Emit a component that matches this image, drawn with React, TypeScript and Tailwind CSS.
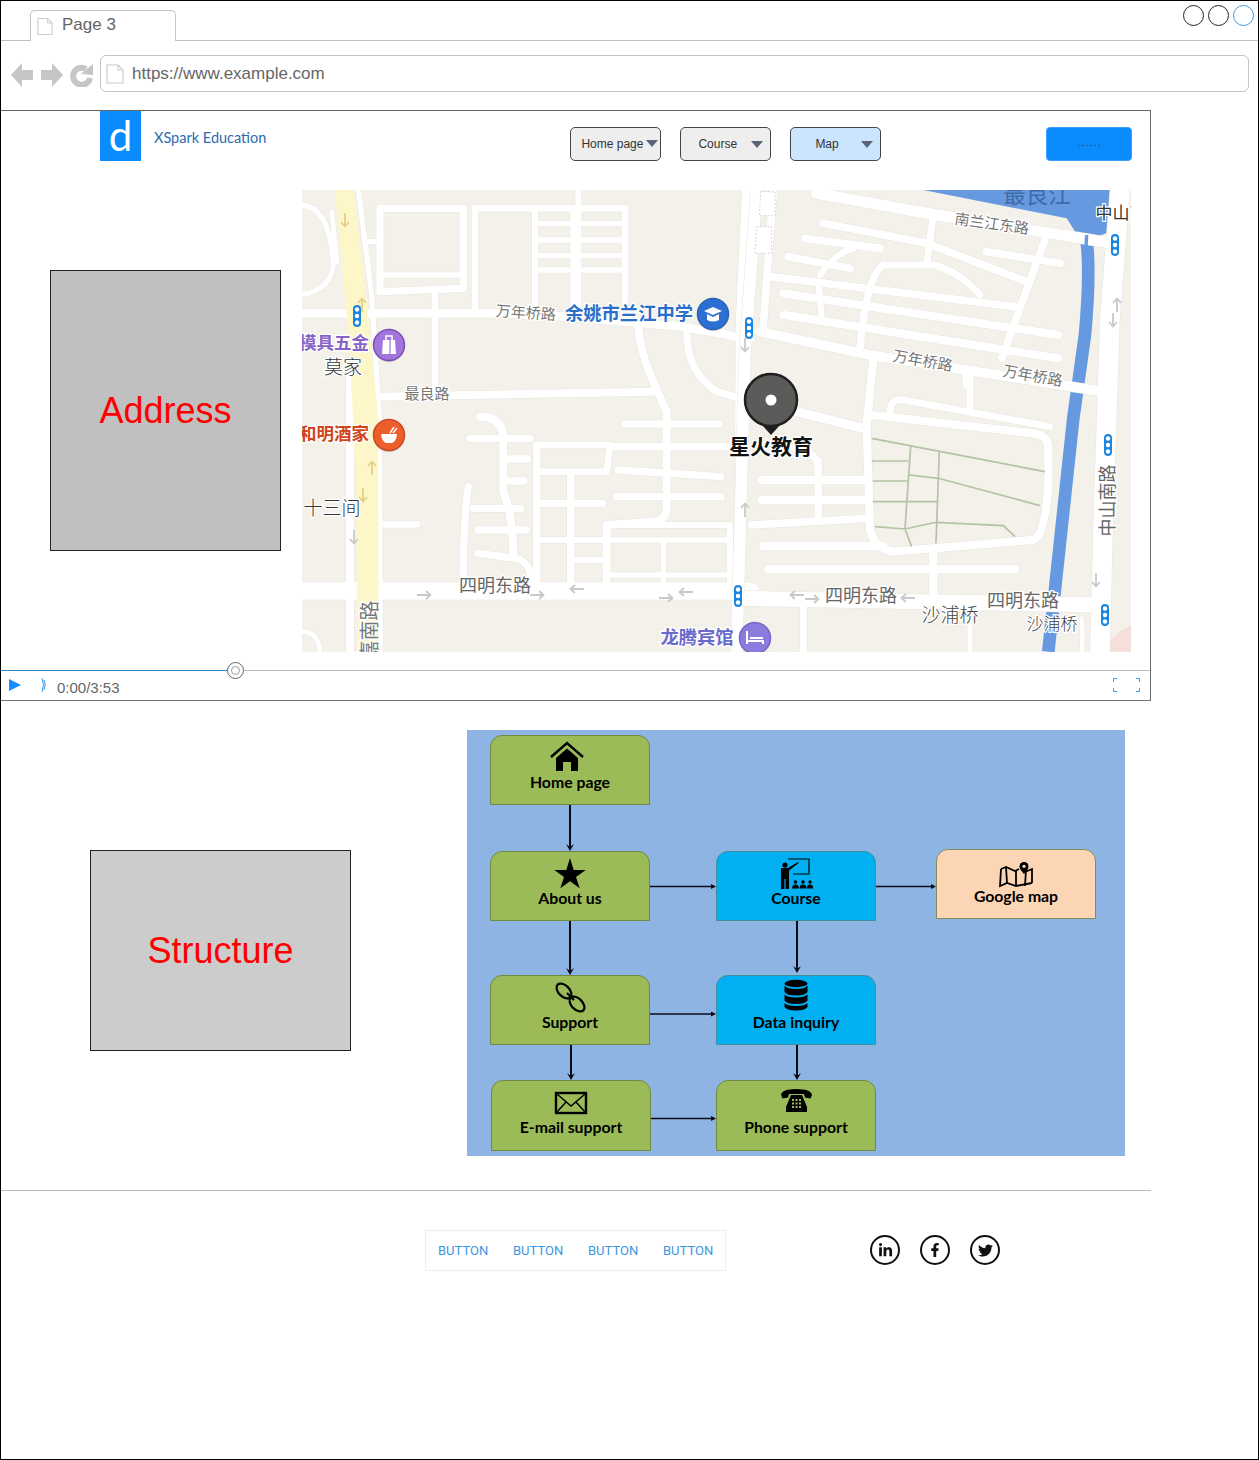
import { FaLinkedinIn, FaFacebookF, FaTwitter } from "react-icons/fa";

type Road = [string, number];

const roadsLeft: Road[] = [
  ["M5 385 L600 385 L800 395 L1150 425 L1350 462", 24],
  ["M235 635 L1060 620", 22],
  ["M0 1218 H1350", 50],
  ["M240 320 V70 H490 V310 L240 320", 20],
  ["M250 270 H490", 14],
  ["M195 170 H240", 14],
  ["M405 330 V620", 18],
  ["M525 385 V70 H975 V385", 18],
  ["M705 70 V380 M835 15 V380 M820 70 V380", 16],
  ["M705 115 H975 M705 165 H975 M705 212 H975 M705 255 H975", 14],
  ["M1015 425 Q1020 500 1060 590 L1100 680 V970 Q1100 1005 1060 1010 L920 1020 V1190", 22],
  ["M1160 440 Q1160 560 1250 620 L1340 645", 20],
  ["M975 717 H1255", 20],
  ["M940 785 H1320", 20],
  ["M955 855 L1262 875", 20],
  ["M950 935 H1262", 20],
  ["M540 695 Q610 695 610 760 V920 Q640 1000 640 1105", 22],
  ["M510 760 H690 M610 822 H682 M610 888 H672 M520 970 H662 M535 1035 H678", 20],
  ["M535 1105 L650 1120 Q690 1130 695 1190", 20],
  ["M505 905 Q490 1000 490 1190", 20],
  ["M710 780 H930 L920 860 H710", 18],
  ["M710 780 V1190 M812 870 V1190", 20],
  ["M710 955 H908", 20],
  ["M720 1065 H910 M820 1125 H910", 16],
  ["M920 1020 H1290 V1190 M920 1020 V1190", 16],
  ["M1090 1070 V1190 M930 1065 H1280 M930 1170 H1280", 14],
  ["M240 1018 H352", 18],
  ["M5 60 Q90 70 100 230 Q100 310 5 330", 14],
  ["M95 80 L112 230", 12],
  ["M150 550 V1400", 22],
  ["M175 15 L215 330 L238 700 L242 1400", 14],
  ["M5 1340 Q55 1340 60 1400", 12],
  ["M1340 15 L1322 400 L1315 1400", 26],
];

const roadsRight: Road[] = [
  ["M1200 15 L1170 400 L1150 1000 L1140 1400", 54],
  ["M290 25 L650 90 L1180 175", 28],
  ["M160 15 L130 420", 18],
  ["M310 115 L620 175 L920 290", 18],
  ["M255 160 L480 190", 18],
  ["M205 215 L390 250", 18],
  ["M800 200 L1020 235", 18],
  ["M150 275 L885 365", 18],
  ["M190 325 L1015 450", 20],
  ["M190 390 L1015 520", 20],
  ["M640 90 L620 240", 16],
  ["M975 165 L845 520", 18],
  ["M300 270 Q350 200 400 190 M295 290 L305 400", 14],
  ["M490 240 Q440 270 420 490", 18],
  ["M490 240 H640 Q720 260 780 330", 16],
  ["M120 440 L450 510 L1150 620", 24],
  ["M460 520 L440 720 L450 1030 Q460 1090 520 1100 L940 1065 Q975 1050 985 900 V790 Q985 750 940 745 L450 690", 20],
  ["M230 680 L430 730", 22],
  ["M510 680 Q510 640 550 645 L990 725", 16],
  ["M750 570 V670 M738 560 V600", 16],
  ["M95 1020 L440 1000", 18],
  ["M125 885 H440 M125 945 H440", 20],
  ["M295 830 V1000", 18],
  ["M220 790 Q295 800 295 850", 16],
  ["M130 1083 H490", 20],
  ["M145 1153 H885", 20],
  ["M640 1100 V1240", 20],
  ["M60 1240 L1140 1260", 40],
  ["M250 1270 V1400", 16],
  ["M750 1300 V1400", 10],
  ["M1085 1300 Q1090 1340 1085 1400", 8],
  ["M110 15 L75 500 L50 1400", 30],
];

function Roads({ list, extra }: { list: Road[]; extra: number }) {
  return (
    <>
      {list.map(([d, w], i) => (
        <path key={`c${i}`} d={d} fill="none" stroke="#e7e5dd" strokeWidth={w + extra + 3} strokeLinecap="round" strokeLinejoin="round" />
      ))}
      {list.map(([d, w], i) => (
        <path key={`r${i}`} d={d} fill="none" stroke="#ffffff" strokeWidth={w + extra} strokeLinecap="round" strokeLinejoin="round" />
      ))}
    </>
  );
}

function Traffic({ x, y }: { x: number; y: number }) {
  return (
    <g transform={`translate(${x - 302} ${y - 190})`}>
      <rect x={-4} y={-11} width={8} height={22} rx={4} fill="#1b86dd" />
      <circle cy={-6.5} r={2.2} fill="#fff" />
      <circle r={2.2} fill="#fff" />
      <circle cy={6.5} r={2.2} fill="#fff" />
    </g>
  );
}

function Arrow({ x, y, r, c = "#c9c9c9" }: { x: number; y: number; r: number; c?: string }) {
  return (
    <g transform={`translate(${x - 302} ${y - 190}) rotate(${r})`} fill="none" stroke={c} strokeWidth={1.8}>
      <path d="M-7 0 H6 M2 -4 L6.5 0 L2 4" />
    </g>
  );
}

function Label({
  x, y, s, c, t, w = 400, rot = 0, halo = true,
}: { x: number; y: number; s: number; c: string; t: string; w?: number; rot?: number; halo?: boolean }) {
  const mx = x - 302;
  const my = y - 190 - 1.5;
  return (
    <text
      x={mx}
      y={my}
      fontSize={s}
      fontWeight={w}
      fill={c}
      stroke={halo ? "#ffffff" : "none"}
      strokeWidth={halo ? 2.5 : 0}
      paintOrder="stroke"
      textAnchor="middle"
      dominantBaseline="central"
      transform={rot ? `rotate(${rot} ${mx} ${my})` : undefined}
    >
      {t}
    </text>
  );
}

function Poi({ x, y, fill, ring, children }: { x: number; y: number; fill: string; ring: string; children: React.ReactNode }) {
  return (
    <g transform={`translate(${x - 302} ${y - 190})`}>
      <circle r={16} cy={1} fill="#00000030" />
      <circle r={15.5} fill={fill} stroke={ring} strokeWidth={1.5} />
      {children}
    </g>
  );
}

function MapDrawing() {
  return (
    <svg viewBox="0 0 829 462" className="block w-[829px] h-[462px] [font-family:'Noto_Sans_CJK_SC',sans-serif]">
      <rect width={829} height={462} fill="#f3f1ea" />
      <g transform="translate(418 -5) scale(0.3333)">
        <path d="M610 15 H1185 V135 L1130 155 L1072 150 L1040 100 Z" fill="#6699e0" />
        <path d="M1100 170 Q1112 260 1095 450 L1060 700 L985 1400" fill="none" stroke="#6699e0" strokeWidth={38} />
        <path d="M1155 1400 Q1180 1340 1240 1320 V1400 Z" fill="#f6dfdb" />
      </g>
      <g transform="translate(-2 -5) scale(0.3333)">
        <Roads list={roadsLeft} extra={2} />
        <path d="M105 15 H160 L195 300 L235 700 L235 1400 H172 L168 900 L150 500 Z" fill="#fdf6c8" />
      </g>
      <g transform="translate(418 -5) scale(0.3333)">
        <Roads list={roadsRight} extra={5} />
        <path d="M1100 150 L1098 190" fill="none" stroke="#6699e0" strokeWidth={10} />
        <path
          d="M455 760 L975 860 M455 828 H565 M458 888 H565 M458 950 H650 M465 1025 L555 1032 L648 1012 L850 1022 L885 1055 M572 785 L555 1032 L575 1085 M658 797 L648 1075 M568 870 L655 880 L960 962"
          fill="none"
          stroke="#b4c3a3"
          strokeWidth={5}
        />
        <path d="M122 20 H165 V92 H118 Z M110 125 H155 V205 H105 Z" fill="#ffffff" stroke="#cfcfc8" strokeWidth={3} strokeDasharray="5 6" />
      </g>

      <Arrow x={345} y={220} r={90} c="#e3cf87" />
      <Arrow x={362} y={305} r={-90} c="#e3cf87" />
      <Arrow x={372} y={468} r={-90} c="#e3cf87" />
      <Arrow x={363} y={495} r={90} c="#e3cf87" />
      <Arrow x={354} y={537} r={90} />
      <Arrow x={424} y={595} r={0} />
      <Arrow x={537} y={595} r={0} />
      <Arrow x={577} y={589} r={180} />
      <Arrow x={666} y={598} r={0} />
      <Arrow x={686} y={592} r={180} />
      <Arrow x={797} y={595} r={180} />
      <Arrow x={812} y={599} r={0} />
      <Arrow x={908} y={598} r={180} />
      <Arrow x={1117} y={305} r={-90} />
      <Arrow x={1113} y={320} r={90} />
      <Arrow x={1096} y={580} r={90} />
      <Arrow x={745} y={510} r={-90} />
      <Arrow x={745} y={345} r={90} />

      <Traffic x={357} y={316} />
      <Traffic x={749} y={328} />
      <Traffic x={1115} y={245} />
      <Traffic x={1108} y={445} />
      <Traffic x={1105} y={615} />
      <Traffic x={738} y={596} />

      <Label x={526} y={313} s={15} c="#777777" t="万年桥路" rot={4} />
      <Label x={629} y={313} s={18.3} w={700} c="#2a6fc9" t="余姚市兰江中学" />
      <Label x={334} y={343} s={17.5} w={700} c="#8a63c9" t="模具五金" />
      <Label x={343} y={367} s={19} c="#333333" t="莫家" w={300} />
      <Label x={427} y={394} s={15} c="#777777" t="最良路" />
      <Label x={334} y={434} s={17.5} w={700} c="#d0451a" t="和明酒家" />
      <Label x={332} y={508} s={19} c="#333333" t="十三间" w={300} />
      <Label x={495} y={585} s={18} c="#666666" t="四明东路" />
      <Label x={368} y={632} s={20} c="#777777" t="嘉南路" rot={-90} />
      <Label x={697} y={637} s={18.3} w={700} c="#6a6acb" t="龙腾宾馆" />
      <Label x={923} y={361} s={15} c="#777777" t="万年桥路" rot={10} />
      <Label x={1033} y={376} s={15} c="#777777" t="万年桥路" rot={10} />
      <Label x={992} y={224} s={15} c="#777777" t="南兰江东路" rot={8} />
      <Label x={1037} y={194} s={22.5} c="#3e6aa8" t="最良江" halo={false} />
      <Label x={1121} y={213} s={17} c="#333333" t="中山南" />
      <Label x={1106} y={502} s={18} c="#666666" t="中山南路" rot={-90} />
      <Label x={861} y={595} s={18} c="#666666" t="四明东路" />
      <Label x={1023} y={600} s={18} c="#666666" t="四明东路" />
      <Label x={950} y={615} s={19} c="#444444" t="沙浦桥" w={300} />
      <Label x={1052} y={624} s={17} c="#444444" t="沙浦桥" w={300} />

      <Poi x={389} y={345} fill="#a275dc" ring="#7d4fb4">
        <path d="M-6 -5 H6 L7 9 H-7 Z" fill="#fff" />
        <path d="M-3 -5 V-9 H3 V-5" fill="none" stroke="#fff" strokeWidth={1.5} />
        <path d="M1 -5 V9" stroke="#a275dc" strokeWidth={1.2} />
      </Poi>
      <Poi x={389} y={435} fill="#ec5f2a" ring="#c9482a">
        <path d="M-8 -1 H8 Q7 7 3 8 H-3 Q-7 7 -8 -1 Z" fill="#fff" />
        <path d="M1 -2 L5 -8 M4 -2 L8 -7" stroke="#fff" strokeWidth={1.4} />
      </Poi>
      <Poi x={713} y={314} fill="#2c6fd2" ring="#2a62b8">
        <path d="M-9 -3 L0 -7 L9 -3 L0 1 Z" fill="#fff" />
        <path d="M-6 0 V6 Q0 9 6 6 V0 L0 3 Z" fill="#fff" />
      </Poi>
      <Poi x={755} y={638} fill="#8a7bdc" ring="#7468c6">
        <path d="M-8 -7 V6 M-8 3 H8 V6 M-5 0 H8" fill="none" stroke="#fff" strokeWidth={2} />
      </Poi>

      <g transform="translate(469 210)">
        <path d="M-10 24 L0 35 L10 24 Z" fill="#1f1f1f" />
        <circle r={26} fill="#5d5b5a" stroke="#1f1f1f" strokeWidth={2.5} />
        <circle r={5.5} fill="#ffffff" />
      </g>
      <Label x={771} y={446} s={21} w={700} c="#111111" t="星火教育" />
    </svg>
  );
}

type NodeProps = { className: string; label: string; children: React.ReactNode };

function DiagramNode({ className, label, children }: NodeProps) {
  return (
    <div className={`absolute w-[160px] flex flex-col items-center rounded-t-[12px] border ${className}`}>
      <svg viewBox="0 0 40 38" className="block w-[40px] h-[38px]">
        {children}
      </svg>
      <div className="-mt-[1px] h-[18px] text-[15.8px] leading-[18px] font-bold text-black [font-family:Lato,sans-serif]">{label}</div>
    </div>
  );
}

function Connectors() {
  const down: [number, number, number][] = [
    [103, 75, 121],
    [103, 191, 245],
    [330, 191, 243],
    [104, 315, 350],
    [330, 315, 350],
  ];
  const right: [number, number, number][] = [
    [183, 249, 156.5],
    [409, 469, 156.5],
    [183, 249, 284],
    [183, 249, 388.5],
  ];
  return (
    <svg viewBox="0 0 658 426" className="absolute inset-0 w-[658px] h-[426px]">
      {down.map(([x, a, b], i) => (
        <g key={i}>
          <path d={`M${x} ${a} V${b - 2}`} stroke="#0b0b1a" strokeWidth={2} />
          <path d={`M${x - 4} ${b - 7} L${x} ${b} L${x + 4} ${b - 7} L${x} ${b - 4} Z`} fill="#0b0b1a" />
        </g>
      ))}
      {right.map(([a, b, y], i) => (
        <g key={i}>
          <path d={`M${a} ${y} H${b - 2}`} stroke="#0b0b1a" strokeWidth={1.6} />
          <path d={`M${b - 5} ${y - 2.5} L${b} ${y} L${b - 5} ${y + 2.5} Z`} fill="#0b0b1a" />
        </g>
      ))}
    </svg>
  );
}

function PageIcon({ className }: { className: string }) {
  return (
    <svg viewBox="0 0 18 20" className={className} fill="none" stroke="#cccccc" strokeWidth={1.2}>
      <path d="M1 1 H12 L17 6 V19 H1 Z M12 1 V6 H17" />
    </svg>
  );
}

function Caret() {
  return <span className="w-0 h-0 border-x-[6px] border-x-transparent border-t-[7px] border-t-[#5b6477]" />;
}

const selectBase =
  "relative flex items-center h-[34px] w-[91px] rounded-[5px] border border-[#444444] text-[12px] text-[#333333]";

export default function App() {
  return (
    <div className="relative w-[1259px] h-[1460px] border border-black bg-white overflow-hidden [font-family:'Liberation_Sans',Arial,sans-serif]">
      {/* browser chrome */}
      <div className="h-[109px] flex flex-col">
        <div className="h-[40px] flex justify-between border-b border-[#c0c0c0]">
          <div className="relative ml-[29px] mt-[9px] w-[146px] h-[31px] flex items-start rounded-t-[5px] border-x border-t border-[#c4c4c4] bg-white pt-[6px] pl-[31px] text-[17px] leading-[16px] text-[#666666]">
            <PageIcon className="absolute left-[6px] top-[6px] w-[16px] h-[19px]" />
            Page 3
          </div>
          <div className="flex gap-[4px] mt-[4px] mr-[4px]">
            <span className="w-[21px] h-[21px] rounded-full border border-[#222222]" />
            <span className="w-[21px] h-[21px] rounded-full border border-[#222222]" />
            <span className="w-[21px] h-[21px] rounded-full border border-[#3a9bea]" />
          </div>
        </div>
        <div className="flex-1 flex items-start pt-[14px] pl-[10px]">
          <svg viewBox="0 0 82 24" className="block mt-[8px] w-[82px] h-[24px]" fill="#c6c6c6">
            <path d="M0 12 L11 0 V7 H22 V17 H11 V24 Z" />
            <path d="M52 12 L41 0 V7 H30 V17 H41 V24 Z" />
            <path d="M79 15 A8.5 8.5 0 1 1 75 6" fill="none" stroke="#c6c6c6" strokeWidth={6} />
            <path d="M70 11 L82 12 V1 Z" />
          </svg>
          <div className="ml-[7px] w-[1149px] h-[37px] flex items-center rounded-[6px] border border-[#c4c4c4] pl-[5px] text-[17px] text-[#666666]">
            <PageIcon className="w-[18px] h-[20px] mr-[8px]" />
            https://www.example.com
          </div>
        </div>
      </div>

      {/* framed page */}
      <div className="w-[1150px] h-[591px] flex flex-col border-t border-r border-b border-t-[#666666] border-r-[#666666] border-b-[#777777]">
        <div className="flex items-start h-[50px]">
          <div className="ml-[99px] w-[41px] h-[50px] flex items-center justify-center bg-[#0a8cff] pb-[3px] text-white text-[42px] leading-[46px] [font-family:Lato,sans-serif]">
            d
          </div>
          <div className="ml-[13px] mt-[18px] text-[14.5px] leading-[18px] text-[#2a6db0] [font-family:Lato,sans-serif]">
            XSpark Education
          </div>
          <div className="flex gap-[19px] ml-[304px] mt-[16px]">
            <div className={`${selectBase} bg-[#eeeeee] pl-[10px]`}>
              Home page
              <span className="absolute right-[2px] top-[12px] flex"><Caret /></span>
            </div>
            <div className={`${selectBase} bg-[#eeeeee] pl-[17px]`}>
              Course
              <span className="absolute right-[7px] top-[13px] flex"><Caret /></span>
            </div>
            <div className={`${selectBase} bg-[#cce5ff] pl-[24px]`}>
              Map
              <span className="absolute right-[7px] top-[13px] flex"><Caret /></span>
            </div>
          </div>
          <div className="ml-[165px] mt-[16px] w-[86px] h-[34px] rounded-[4px] bg-[#0a8cff] border border-[#3aa0ff] flex items-center justify-center pb-[3px] text-[11px] leading-none tracking-[1px] text-[#1a4a80]">
            ......
          </div>
        </div>

        <div className="flex items-start mt-[29px]">
          <div className="ml-[49px] mt-[80px] w-[231px] h-[281px] flex items-center justify-center bg-[#c0c0c0] border border-[#222222] text-[36px] text-[#ff0000]">
            Address
          </div>
          <div className="ml-[21px] w-[829px] h-[462px]">
            <MapDrawing />
          </div>
        </div>

        <div className="relative mt-[18px] flex-1 border-t border-[#bdbdbd] flex items-center">
          <span className="absolute left-0 top-[-1px] w-[228px] h-px bg-[#2b86c8]" />
          <span className="absolute left-[226px] top-[-9px] w-[17px] h-[17px] rounded-full border border-[#666666] bg-white flex items-center justify-center">
            <span className="w-[9px] h-[9px] rounded-full border border-[#999999]" />
          </span>
          <svg viewBox="0 0 12 12" className="ml-[8px] w-[12px] h-[12px] -mt-[1px]">
            <path d="M0 0 L12 6 L0 12 Z" fill="#1a8cff" />
          </svg>
          <svg viewBox="0 0 6 16" className="ml-[20px] w-[6px] h-[16px] -mt-[1px]" fill="none" stroke="#3a9bea" strokeWidth={1}>
            <path d="M1 1 Q4 8 1 15 M3 3 Q5.5 8 3 13" />
          </svg>
          <span className="ml-[10px] text-[15px] leading-[16px] mt-[4px] text-[#666666]">0:00/3:53</span>
          <svg viewBox="0 0 27 14" className="ml-auto mr-[10px] w-[27px] h-[14px] -mt-[1px]" fill="none" stroke="#3a9bea" strokeWidth={1}>
            <path d="M4 .5 H.5 V4 M23 .5 H26.5 V4 M.5 10 V13.5 H4 M26.5 10 V13.5 H23" />
          </svg>
        </div>
      </div>

      {/* structure */}
      <div className="h-[489px] flex items-start pl-[89px]">
        <div className="mt-[149px] w-[261px] h-[201px] flex items-center justify-center bg-[#cccccc] border border-[#222222] text-[36px] text-[#ff0000]">
          Structure
        </div>
        <div className="relative ml-[116px] mt-[29px] w-[658px] h-[426px] bg-[#8eb4e3]">
          <Connectors />
          <DiagramNode className="left-[23px] top-[5px] h-[70px] bg-[#9bbb59] border-[#71893f]" label="Home page">
            <path d="M1 21 L17 7 L33 21" fill="none" stroke="#000" strokeWidth={2.4} />
            <path d="M6 22 L17 12.5 L28 22 V35 H21 V26 H13 V35 H6 Z" fill="#000" />
          </DiagramNode>
          <DiagramNode className="left-[23px] top-[121px] h-[70px] bg-[#9bbb59] border-[#71893f]" label="About us">
            <path d="M20 6 L23.7 17.9 L35.7 17.9 L26 24.9 L29.7 36.3 L20 29.3 L10.3 36.3 L14 24.9 L4.3 17.9 L16.3 17.9 Z" fill="#000" />
          </DiagramNode>
          <DiagramNode className="left-[249px] top-[121px] h-[70px] bg-[#00b0f0] border-[#3f8f9a]" label="Course">
            <circle cx={9} cy={13} r={2.6} fill="#000" />
            <path d="M5 16 H12 L22 10 L22.7 11 L13 18.5 V37 H9.6 V27 H8.4 V37 H5 Z" fill="#000" />
            <path d="M12 7 H33 V22 H17" fill="none" stroke="#000" strokeWidth={1.2} />
            <g fill="#000">
              <circle cx={19.5} cy={30} r={1.7} />
              <path d="M16 36.5 Q16 32.5 19.5 32.5 Q23 32.5 23 36.5 Z" />
              <circle cx={27} cy={30} r={1.7} />
              <path d="M23.6 36.5 Q23.6 32.5 27 32.5 Q30.4 32.5 30.4 36.5 Z" />
              <circle cx={34} cy={30} r={1.7} />
              <path d="M30.8 36.5 Q30.8 32.5 34 32.5 Q37.2 32.5 37.2 36.5 Z" />
            </g>
          </DiagramNode>
          <DiagramNode className="left-[469px] top-[119px] h-[70px] bg-[#fcd5b5] border-[#7f8f5a]" label="Google map">
            <path d="M5 19 L10 17 L19 21 L23 19 M5 19 L4 36 L11 33 L20 36 L36 33 M10 17 L11 33 M20 21 L20 36 M29 22 L36 19 V33 M30 20 L29 36" fill="none" stroke="#000" strokeWidth={1.8} />
            <path d="M28 12 A4.5 4.5 0 0 1 32.5 16.5 Q32.5 19 28 24 Q23.5 19 23.5 16.5 A4.5 4.5 0 0 1 28 12 Z" fill="#000" />
            <circle cx={28} cy={16.3} r={1.6} fill="#fcd5b5" />
          </DiagramNode>
          <DiagramNode className="left-[23px] top-[245px] h-[70px] bg-[#9bbb59] border-[#71893f]" label="Support">
            <g fill="none" stroke="#000" strokeWidth={2.2}>
              <ellipse cx={14} cy={15} rx={9} ry={5.5} transform="rotate(45 14 15)" />
              <ellipse cx={27} cy={28} rx={9} ry={5.5} transform="rotate(45 27 28)" />
              <path d="M17 17 L24 24" />
            </g>
          </DiagramNode>
          <DiagramNode className="left-[249px] top-[245px] h-[70px] bg-[#00b0f0] border-[#3f8f9a]" label="Data inquiry">
            <g fill="#000">
              <ellipse cx={20} cy={7.5} rx={11.5} ry={3.7} />
              <path d="M8.5 9.5 Q11 13 20 13 Q29 13 31.5 9.5 V16 Q29 19.5 20 19.5 Q11 19.5 8.5 16 Z" />
              <path d="M8.5 18.5 Q11 21.5 20 21.5 Q29 21.5 31.5 18.5 V24.5 Q29 28 20 28 Q11 28 8.5 24.5 Z" />
              <path d="M8.5 27 Q11 30 20 30 Q29 30 31.5 27 V31 Q29 34.5 20 34.5 Q11 34.5 8.5 31 Z" />
            </g>
          </DiagramNode>
          <DiagramNode className="left-[24px] top-[350px] h-[71px] bg-[#9bbb59] border-[#71893f]" label="E-mail support">
            <rect x={5} y={12} width={30} height={20} fill="none" stroke="#000" strokeWidth={2.4} />
            <path d="M6 13 L20 25 L34 13 M6 31 L15 21 M34 31 L25 21" fill="none" stroke="#000" strokeWidth={1.5} />
          </DiagramNode>
          <DiagramNode className="left-[249px] top-[350px] h-[71px] bg-[#9bbb59] border-[#71893f]" label="Phone support">
            <path d="M5 14 Q6 8 20 8 Q35 8 36 14 L34.5 17.5 L29 16.5 L28 13 H13 L12 16.5 L6.5 17.5 Z" fill="#000" />
            <path d="M15 14 H26 L31 26 V31 H10 V26 Z" fill="#000" />
            <g fill="#9bbb59">
              <rect x={16} y={18} width={2} height={2} />
              <rect x={19.5} y={18} width={2} height={2} />
              <rect x={23} y={18} width={2} height={2} />
              <rect x={16} y={21.5} width={2} height={2} />
              <rect x={19.5} y={21.5} width={2} height={2} />
              <rect x={23} y={21.5} width={2} height={2} />
              <rect x={16} y={25} width={2} height={2} />
              <rect x={19.5} y={25} width={2} height={2} />
              <rect x={23} y={25} width={2} height={2} />
            </g>
          </DiagramNode>
        </div>
      </div>

      {/* footer */}
      <div className="w-[1150px] border-t border-[#bbbbbb] flex items-start pt-[39px] pl-[424px]">
        <div className="w-[301px] h-[41px] flex items-center gap-[25px] pl-[12px] border border-[#eeeeee] text-[13px] text-[#3a97e0] [font-family:Roboto,sans-serif]">
          <span className="w-[50px] text-center">BUTTON</span>
          <span className="w-[50px] text-center">BUTTON</span>
          <span className="w-[50px] text-center">BUTTON</span>
          <span className="w-[50px] text-center">BUTTON</span>
        </div>
        <div className="flex gap-[20px] ml-[144px] mt-[5px]">
          <span className="w-[30px] h-[30px] rounded-full border-2 border-[#111111] flex items-center justify-center text-[15px] text-[#111111]"><FaLinkedinIn /></span>
          <span className="w-[30px] h-[30px] rounded-full border-2 border-[#111111] flex items-center justify-center text-[14px] text-[#111111]"><FaFacebookF /></span>
          <span className="w-[30px] h-[30px] rounded-full border-2 border-[#111111] flex items-center justify-center text-[15px] text-[#111111]"><FaTwitter /></span>
        </div>
      </div>
    </div>
  );
}
